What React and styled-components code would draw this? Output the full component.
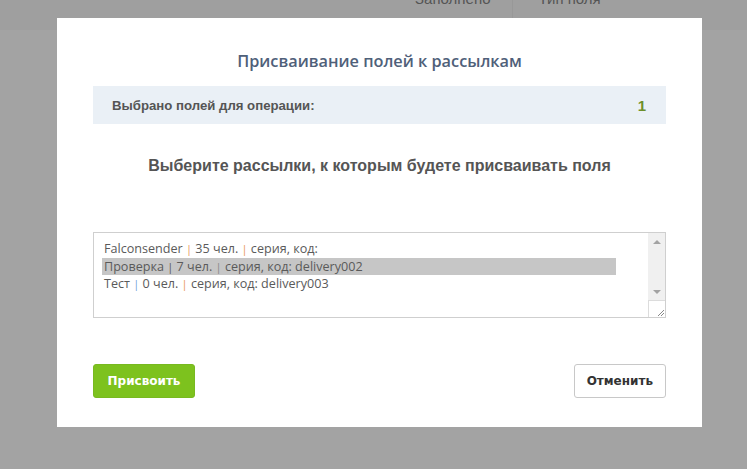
import React from "react";
import styled, { createGlobalStyle } from "styled-components";

const GlobalStyle = createGlobalStyle`
  html, body { margin: 0; padding: 0; }
  body {
    width: 747px;
    height: 469px;
    overflow: hidden;
    background: #a3a3a3;
    font-family: "Liberation Sans", Arial, sans-serif;
  }
`;

/** page behind the overlay */
const Page = styled.div`
  width: 747px;
  height: 469px;
  background: #a3a3a3;
  position: relative;
  overflow: hidden;
`;

const PageHeader = styled.div`
  height: 30px;
  background: #9f9f9f;
  display: flex;
  align-items: flex-start;
  padding-left: 415px;
  overflow: hidden;
`;

const HeaderCell = styled.div`
  font-family: "Liberation Sans", Arial, sans-serif;
  font-size: 15px;
  color: #555;
  margin-top: -10px;
  padding: 0 ${p => p.pad || 21}px;
  height: 30px;
  line-height: 18px;
  border-left: ${p => (p.divider ? "1px solid #989898" : "none")};
  &:first-child { padding-left: 0; }
`;

/** modal window */
const Modal = styled.div`
  position: absolute;
  left: 57px;
  top: 18px;
  width: 645px;
  height: 409px;
  background: #fff;
  box-sizing: border-box;
  padding: 32px 36px 0;
  display: flex;
  flex-direction: column;
`;

const Title = styled.h2`
  margin: 0;
  text-align: center;
  font-family: "Open Sans", sans-serif;
  font-weight: 600;
  font-size: 16.3px;
  line-height: 22px;
  color: #4f6079;
`;

const InfoBar = styled.div`
  margin-top: 14px;
  height: 38px;
  background: #eaf0f6;
  display: flex;
  align-items: center;
  justify-content: space-between;
  padding: 0 20px 0 19px;
  font-family: "Liberation Sans", Arial, sans-serif;
  font-weight: 700;
  font-size: 13.2px;
  color: #555;
`;

const Count = styled.span`
  font-size: 15px;
  color: #6d8f2a;
`;

const Subtitle = styled.h3`
  margin: 32px 0 0;
  text-align: center;
  font-family: "Liberation Sans", Arial, sans-serif;
  font-weight: 700;
  font-size: 16px;
  line-height: 20px;
  color: #555;
`;

const ListBox = styled.div`
  margin-top: 56px;
  height: 86px;
  border: 1px solid #cfcfcf;
  box-sizing: border-box;
  display: flex;
  position: relative;
`;

const Options = styled.div`
  flex: 1;
  padding: 7px 32px 0 8px;
`;

const Option = styled.div`
  font-family: "Open Sans", Lato, sans-serif;
  font-size: 12.6px;
  line-height: 17.5px;
  color: #5a5a5a;
  padding-left: 2px;
  background: ${p => (p.selected ? "#c6c6c6" : "transparent")};
  white-space: nowrap;
`;

const Sep = styled.span`
  color: ${p => p.color};
  font-size: 11px;
`;

const ScrollBar = styled.div`
  width: 17px;
  background: #f0f0f0;
  display: flex;
  flex-direction: column;
  align-items: center;
`;

const Arrow = styled.div`
  width: 17px;
  height: 17px;
  display: flex;
  align-items: center;
  justify-content: center;
  &::before {
    content: "";
    border-left: 4px solid transparent;
    border-right: 4px solid transparent;
    ${p => (p.down ? "border-top: 4px solid #a3a3a3;" : "border-bottom: 4px solid #a3a3a3;")}
  }
`;

const Track = styled.div`
  flex: 1;
`;

const Grip = styled.div`
  width: 16px;
  height: 16px;
  background: #fff;
  border-left: 1px solid #dcdcdc;
  border-top: 1px solid #dcdcdc;
  display: flex;
  align-items: flex-end;
  justify-content: flex-end;
`;

const Footer = styled.div`
  margin-top: 46px;
  display: flex;
  justify-content: space-between;
`;

const Button = styled.button`
  height: 34px;
  border-radius: 3px;
  box-sizing: border-box;
  font-family: "DejaVu Sans", Verdana, sans-serif;
  font-weight: 700;
  font-size: 12px;
  cursor: pointer;
  padding: 0 ${p => (p.primary ? 13.5 : 12)}px;
  background: ${p => (p.primary ? "#7dc21e" : "#fff")};
  color: ${p => (p.primary ? "#fff" : "#333")};
  border: 1px solid ${p => (p.primary ? "#78b920" : "#c8c8c8")};
`;

const rows = [
  { name: "Falconsender", count: 35, code: "", s: ["#e8955a", "#e8955a"] },
  { name: "Проверка", count: 7, code: "delivery002", s: ["#555", "#888"], selected: true },
  { name: "Тест", count: 0, code: "delivery003", s: ["#6aa0d8", "#e8955a"] },
];

export default function App() {
  return (
    <>
      <GlobalStyle />
      <Page>
        <PageHeader>
          <HeaderCell pad={21}>Заполнено</HeaderCell>
          <HeaderCell divider pad={26}>Тип поля</HeaderCell>
        </PageHeader>
        <Modal>
          <Title>Присваивание полей к рассылкам</Title>
          <InfoBar>
            <span>Выбрано полей для операции:</span>
            <Count>1</Count>
          </InfoBar>
          <Subtitle>Выберите рассылки, к которым будете присваивать поля</Subtitle>
          <ListBox>
            <Options>
              {rows.map(r => (
                <Option key={r.name} selected={r.selected}>
                  {r.name} <Sep color={r.s[0]}>|</Sep> {r.count} чел. <Sep color={r.s[1]}>|</Sep> серия, код: {r.code}
                </Option>
              ))}
            </Options>
            <ScrollBar>
              <Arrow />
              <Track />
              <Arrow down />
              <Grip>
                <svg width="10" height="10" viewBox="0 0 10 10">
                  <path d="M9 3 L3 9 M9 6 L6 9" stroke="#888" strokeWidth="1" />
                </svg>
              </Grip>
            </ScrollBar>
          </ListBox>
          <Footer>
            <Button primary>Присвоить</Button>
            <Button>Отменить</Button>
          </Footer>
        </Modal>
      </Page>
    </>
  );
}
